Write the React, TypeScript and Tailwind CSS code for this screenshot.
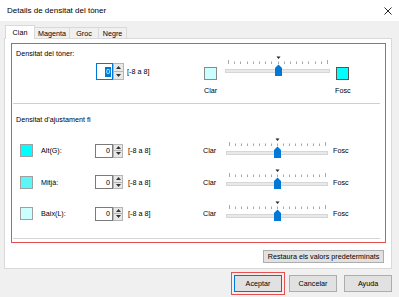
import React from "react";

function Slider({ w }: { w: number }) {
  const ticks = Array.from({ length: 17 }, (_, i) => 3 + (i * (w - 6)) / 16);
  const cx = Math.round(w / 2) + 0.5;
  return (
    <svg width={w} height={21} className="block shrink-0">
      <path d={`M${cx - 2} 0.5 L${cx + 2} 0.5 L${cx} 3 Z`} fill="#222" />
      {ticks.map((x, i) => (
        <line
          key={i}
          x1={Math.round(x) + 0.5}
          x2={Math.round(x) + 0.5}
          y1={i === 0 || i === 16 ? 4 : 5.5}
          y2={8}
          stroke="#a8a8a8"
          strokeWidth={1}
        />
      ))}
      <rect x={0.5} y={13.5} width={w - 1} height={3} fill="#e7eaea" stroke="#d6d6d6" />
      <path
        d={`M${cx - 3.5} 12 L${cx} 8.5 L${cx + 3.5} 12 L${cx + 3.5} 20 L${cx - 3.5} 20 Z`}
        fill="#0078d7"
      />
    </svg>
  );
}

function Spinner({ cls }: { cls: string }) {
  return (
    <div className={`flex flex-col ${cls}`}>
      <div className="flex-1 bg-[#e8e8e8] border border-[#b5b5b5] flex items-center justify-center">
        <svg width="5" height="3" viewBox="0 0 5 3">
          <path d="M0 3 L2.5 0 L5 3 Z" fill="#333" />
        </svg>
      </div>
      <div className="flex-1 bg-[#e8e8e8] border border-t-0 border-[#b5b5b5] flex items-center justify-center">
        <svg width="5" height="3" viewBox="0 0 5 3">
          <path d="M0 0 L5 0 L2.5 3 Z" fill="#333" />
        </svg>
      </div>
    </div>
  );
}

function Row({ sw, label, h }: { sw: string; label: string; h: string }) {
  return (
    <div className={`flex items-center shrink-0 ${h}`}>
      <div className={`ml-[8px] w-[13px] h-[13px] border border-[#a0a0a0] ${sw}`} />
      <div className="ml-[8px] w-[54px]">{label}</div>
      <div className="w-[18px] h-[14px] border border-[#7a7a7a] bg-white flex items-center justify-end pr-[2px]">
        0
      </div>
      <Spinner cls="w-[10px] h-[14px]" />
      <span className="ml-[5px] w-[75px]">[-8 a 8]</span>
      <span className="w-[23px]">Clar</span>
      <div className="self-start mt-[3px]">
        <Slider w={102} />
      </div>
      <span className="ml-[5px]">Fosc</span>
    </div>
  );
}

export default function App() {
  return (
    <div className="w-[399px] h-[297px] bg-[#f0f0f0] flex flex-col overflow-hidden font-['Liberation_Sans',Arial,sans-serif] text-[7.2px] leading-[9px] text-black">
      <div className="h-[21px] bg-white flex items-center justify-between pl-[7px] pr-[7px] shrink-0">
        <span className="text-[8px] leading-[10px]">Details de densitat del tòner</span>
        <svg width="8" height="8" viewBox="0 0 8 8">
          <path d="M0.5 0.5 L7.5 7.5 M7.5 0.5 L0.5 7.5" stroke="#111" strokeWidth="0.9" />
        </svg>
      </div>

      <div className="h-[17px] flex items-end pl-[5px] shrink-0 relative z-10">
        <div className="w-[30px] h-[14px] -mb-px bg-white border border-b-0 border-[#d9d9d9] flex items-center justify-center">
          Cian
        </div>
        <div className="w-[35px] h-[11px] border-t border-r border-[#d9d9d9] flex items-center justify-center">
          Magenta
        </div>
        <div className="w-[29px] h-[11px] border-t border-r border-[#d9d9d9] flex items-center justify-center">
          Groc
        </div>
        <div className="w-[28px] h-[11px] border-t border-r border-[#d9d9d9] flex items-center justify-center">
          Negre
        </div>
      </div>

      <div className="ml-[4px] w-[388px] h-[231px] shrink-0 bg-white border border-[#d9d9d9] flex flex-col pt-[4px] pl-[6px] pr-[5px]">
        <div className="h-[200px] shrink-0 border border-[#e85050] flex flex-col">
          <div className="h-[59px] flex shrink-0">
            <div className="w-[191px] flex flex-col">
              <div className="pl-[4px] pt-[5px]">Densitat del tòner:</div>
              <div className="ml-[84px] mt-[5px] flex items-center">
                <div className="w-[17px] h-[17px] border border-[#0078d7] bg-white flex items-center justify-end pr-[1px]">
                  <span className="bg-[#0078d7] text-white px-[1px] leading-[10px]">0</span>
                </div>
                <Spinner cls="w-[11px] h-[17px]" />
                <span className="ml-[3px]">[-8 a 8]</span>
              </div>
            </div>
            <div className="w-[22px] flex flex-col">
              <div className="ml-[1px] mt-[23px] w-[13px] h-[13px] bg-[#ccffff] border border-[#8a8a8a]" />
              <div className="ml-[1px] mt-[6px]">Clar</div>
            </div>
            <div className="mt-[12px]">
              <Slider w={105} />
            </div>
            <div className="ml-[6px] flex flex-col">
              <div className="mt-[23px] w-[13px] h-[13px] bg-[#00ffff] border border-[#555555]" />
              <div className="-ml-[1px] mt-[6px]">Fosc</div>
            </div>
          </div>

          <div className="h-px bg-[#cfcfcf] ml-[1px] mr-[5px] shrink-0" />

          <div className="pl-[4px] pt-[11px] shrink-0">Densitat d'ajustament fi</div>

          <div className="mt-[11px] flex flex-col">
            <Row sw="bg-[#00ffff]" label="Alt(G):" h="h-[31px]" />
            <Row sw="bg-[#5cf6f6]" label="Mitjà:" h="h-[32px]" />
            <Row sw="bg-[#ccffff]" label="Baix(L):" h="h-[31px]" />
          </div>

          <div className="h-px bg-[#d4d4d4] ml-[1px] mr-[5px] mt-[9px] shrink-0" />
        </div>

        <div className="self-end mr-[2px] mt-[7px] w-[121px] h-[13px] bg-[#e1e1e1] border border-[#adadad] flex items-center justify-center">
          Restaura els valors predeterminats
        </div>
      </div>

      <div className="mt-[6px] flex justify-end gap-[7px] pr-[7px] shrink-0">
        <div className="w-[48px] h-[17px] bg-[#e1e1e1] border border-[#0078d7] flex items-center justify-center outline-1 outline-solid outline-[#e85050] outline-offset-2">
          Aceptar
        </div>
        <div className="w-[48px] h-[17px] bg-[#e1e1e1] border border-[#adadad] flex items-center justify-center">
          Cancelar
        </div>
        <div className="w-[48px] h-[17px] bg-[#e1e1e1] border border-[#adadad] flex items-center justify-center">
          Ayuda
        </div>
      </div>
    </div>
  );
}
